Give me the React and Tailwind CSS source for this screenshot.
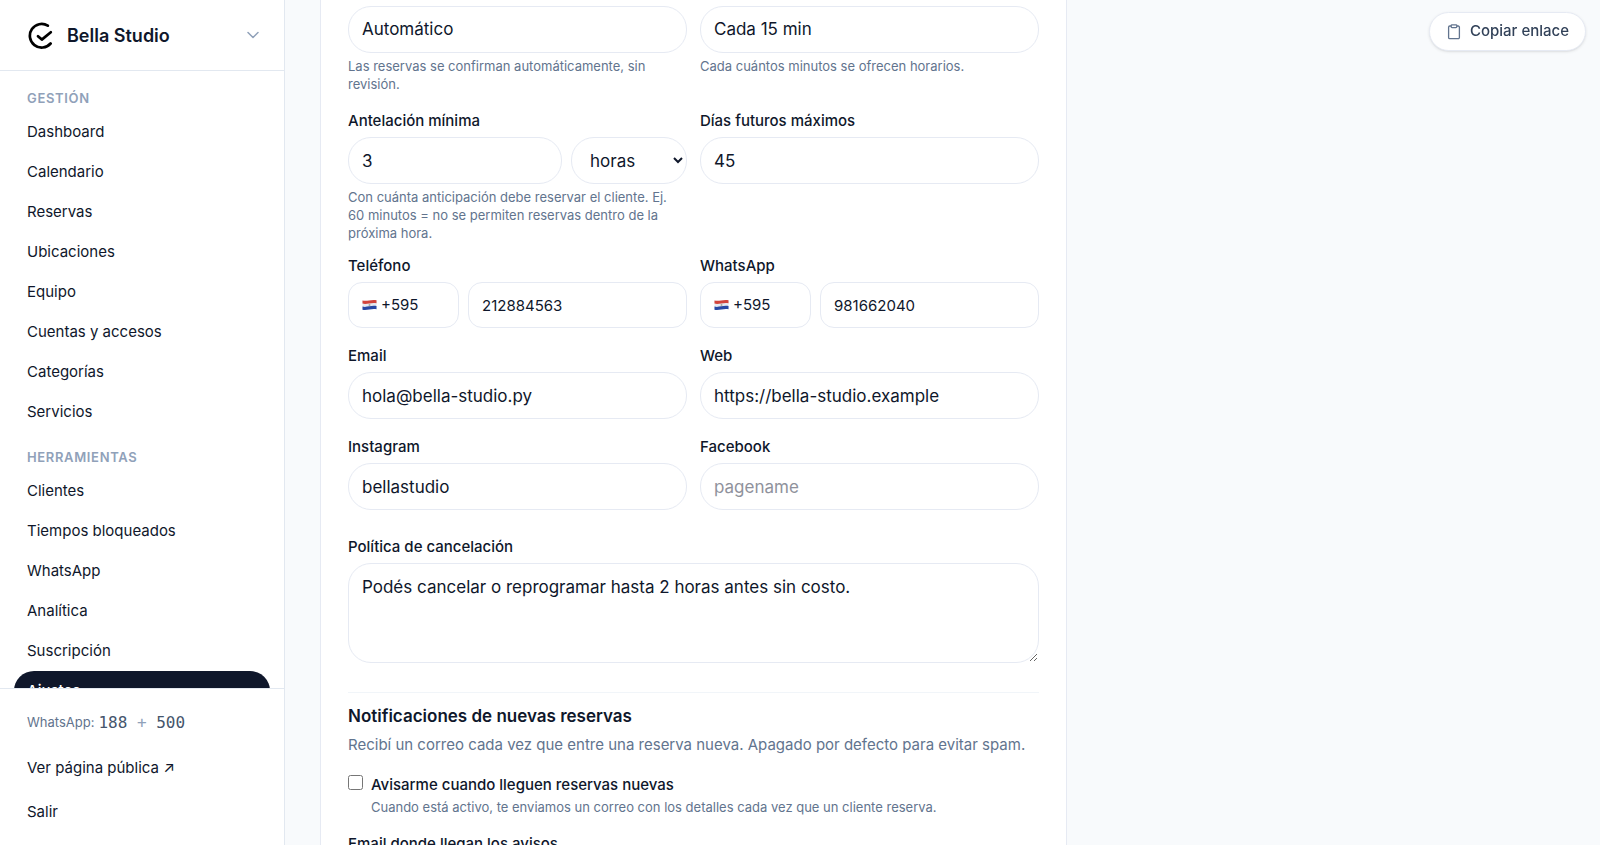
import React from "react";
import { ChevronDown } from "lucide-react";

const management = ["Dashboard", "Calendario", "Reservas", "Ubicaciones", "Equipo", "Cuentas y accesos", "Categorías", "Servicios"];
const tools = ["Clientes", "Tiempos bloqueados", "WhatsApp", "Analítica", "Suscripción", "Ajustes"];

const control = "w-full min-w-0 border border-[#e6eaf3] bg-white px-[13px] text-slate-900 outline-none placeholder:text-[#8f929c]";
const pill = `${control} h-[47px] rounded-[23px] text-[17px]`;

function Logo() {
  return (
    <svg className="size-[27px] shrink-0" viewBox="0 0 27 27" fill="none" stroke="#000" strokeLinecap="round" strokeLinejoin="round" aria-hidden="true">
      <path d="M20.800 3.700A11.800 11.800 0 1 0 23.600 21.500" strokeWidth="2.700" />
      <path d="M11 14.200l3.800 3.400 9-7.400" strokeWidth="2.700" />
    </svg>
  );
}

function Flag() {
  return (
    <svg className="h-3 w-[15px] shrink-0" viewBox="0 0 15 12" aria-hidden="true">
      <path d="M.5 1.500C5 2.600 9 .2 14.500 1.200v9C9 9.200 5 11.800 .5 10.700z" fill="#e6e9f0" />
      <path d="M.5 1.500C5 2.600 9 .2 14.500 1.200v3.100C9 3.300 5 5.700 .5 4.600z" fill="#d2443c" />
      <path d="M.5 7.600C5 8.700 9 6.100 14.500 7.100v3.100C9 9.200 5 11.800 .5 10.700z" fill="#2748a4" />
      <circle cx="7.500" cy="6" r="1" fill="#a9a79a" />
    </svg>
  );
}

function NavSection({ title, items }) {
  return (
    <section className="pt-4">
      <h2 className="mb-[5px] px-[13px] text-[13px] leading-[18px] font-semibold tracking-wider text-slate-400 uppercase">{title}</h2>
      <ul>
        {items.map((item) => (
          <li key={item}>
            <a
              href="#"
              className={
                item === "Ajustes"
                  ? "flex h-10 items-center rounded-[20px] bg-slate-900 px-[13px] text-[15px] font-medium text-white"
                  : "flex h-10 items-center rounded-[20px] px-[13px] text-[15px] text-slate-900"
              }
            >
              {item}
            </a>
          </li>
        ))}
      </ul>
    </section>
  );
}

function Field({ id, label, hint, children }) {
  return (
    <div className="min-w-0">
      {label && (
        <label htmlFor={id} className="mb-1.5 block text-[15px] leading-5 font-medium text-slate-900">
          {label}
        </label>
      )}
      {children}
      {hint && <p className="mt-1 pr-2 text-[13px] leading-[18px] text-slate-500">{hint}</p>}
    </div>
  );
}

function TextField({ id, label, ...rest }) {
  return (
    <Field id={id} label={label}>
      <input id={id} className={pill} {...rest} />
    </Field>
  );
}

function PhoneField({ id, label, value }) {
  return (
    <Field id={id} label={label}>
      <div className="flex gap-[9px]">
        <button type="button" aria-label={`Código de país para ${label}`} className="flex h-[46px] w-[111px] shrink-0 items-center gap-1 rounded-[14px] border border-[#e6eaf3] bg-white px-[13px] text-[15px] text-slate-900">
          <Flag />
          +595
        </button>
        <input id={id} type="tel" defaultValue={value} className={`${control} h-[46px] rounded-[14px] text-[15px]`} />
      </div>
    </Field>
  );
}

function Row({ className = "", children }) {
  return <div className={`grid grid-cols-2 gap-x-[13px] ${className}`}>{children}</div>;
}

export default function App() {
  return (
    <div className="flex h-screen overflow-hidden bg-slate-50 font-['Inter',sans-serif] text-slate-900">
      <aside className="flex w-[285px] shrink-0 flex-col border-r border-slate-200 bg-white">
        <button type="button" className="flex h-[71px] shrink-0 items-center border-b border-slate-200 px-[27px] text-left">
          <Logo />
          <span className="ml-[13px] flex-1 text-[18px] font-semibold">Bella Studio</span>
          <ChevronDown className="-mr-1.5 size-5 text-slate-400" strokeWidth={1.8} />
        </button>
        <nav className="min-h-0 flex-1 overflow-hidden px-3.5 pt-0.5">
          <NavSection title="Gestión" items={management} />
          <NavSection title="Herramientas" items={tools} />
        </nav>
        <div className="shrink-0 border-t border-slate-200 bg-white px-[27px] pt-[22px] pb-[13px]">
          <p className="flex h-6 items-center text-[13px] text-slate-500">
            WhatsApp:
            <span className="ml-1 font-['DejaVu_Sans_Mono','Liberation_Mono',monospace] text-[16px] text-slate-600">
              188 <span className="text-slate-400">+</span> 500
            </span>
          </p>
          <a href="#" className="mt-[13px] flex h-10 items-center text-[15px]">Ver página pública ↗</a>
          <button type="button" className="mt-1 flex h-10 items-center text-[15px]">Salir</button>
        </div>
      </aside>

      <main className="min-w-0 flex-1 overflow-hidden pl-[35px]">
        <form className="w-full max-w-[747px] border-x border-[#e6eaf3] bg-white px-[27px] pt-1.5">
          <Row>
            <Field hint="Las reservas se confirman automáticamente, sin revisión.">
              <select aria-label="Confirmación" className={`${pill} appearance-none`}>
                <option>Automático</option>
              </select>
            </Field>
            <Field hint="Cada cuántos minutos se ofrecen horarios.">
              <select aria-label="Intervalo" className={`${pill} appearance-none`}>
                <option>Cada 15 min</option>
              </select>
            </Field>
          </Row>

          <Row className="mt-[18px]">
            <Field
              id="notice"
              label="Antelación mínima"
              hint="Con cuánta anticipación debe reservar el cliente. Ej. 60 minutos = no se permiten reservas dentro de la próxima hora."
            >
              <div className="flex gap-[9px]">
                <input id="notice" defaultValue="3" className={pill} />
                <select aria-label="Unidad de antelación" className="h-[47px] w-[116px] shrink-0 rounded-[23px] border border-[#e6eaf3] bg-white pl-3.5 text-[17px] text-slate-900">
                  <option>horas</option>
                </select>
              </div>
            </Field>
            <TextField id="days" label="Días futuros máximos" defaultValue="45" />
          </Row>

          <Row className="mt-3.5">
            <PhoneField id="phone" label="Teléfono" value="212884563" />
            <PhoneField id="whatsapp" label="WhatsApp" value="981662040" />
          </Row>
          <Row className="mt-[18px]">
            <TextField id="email" label="Email" type="email" defaultValue="hola@bella-studio.py" />
            <TextField id="web" label="Web" type="url" defaultValue="https://bella-studio.example" />
          </Row>
          <Row className="mt-[18px]">
            <TextField id="instagram" label="Instagram" defaultValue="bellastudio" />
            <TextField id="facebook" label="Facebook" placeholder="pagename" />
          </Row>

          <div className="mt-[27px]">
            <Field id="policy" label="Política de cancelación">
              <textarea
                id="policy"
                defaultValue="Podés cancelar o reprogramar hasta 2 horas antes sin costo."
                className="block h-[100px] w-full resize rounded-[23px] border border-[#e6eaf3] bg-white px-[13px] py-2.5 text-[17px] leading-[26px] outline-none"
              />
            </Field>
          </div>

          <section className="mt-[29px] border-t border-slate-100 pt-2.5">
            <h2 className="text-[17px] leading-[26px] font-semibold">Notificaciones de nuevas reservas</h2>
            <p className="mt-1 text-[15px] leading-6 text-slate-500">Recibí un correo cada vez que entre una reserva nueva. Apagado por defecto para evitar spam.</p>
            <div className="mt-[18px] flex gap-2">
              <input id="notify" type="checkbox" className="size-[15px] shrink-0" />
              <div>
                <label htmlFor="notify" className="block text-[15px] leading-5 font-medium">Avisarme cuando lleguen reservas nuevas</label>
                <p className="mt-[3px] text-[13px] leading-[18px] text-slate-500">Cuando está activo, te enviamos un correo con los detalles cada vez que un cliente reserva.</p>
              </div>
            </div>
            <div className="mt-[18px]">
              <TextField id="notify-email" label="Email donde llegan los avisos" type="email" />
            </div>
          </section>
        </form>
      </main>

      <button type="button" className="fixed top-3 right-3.5 flex h-[39px] items-center gap-[9px] rounded-full border border-[#e6eaf3] bg-white pr-4 pl-[17px] text-[15px] font-medium text-slate-700 shadow-sm">
        <svg className="h-4 w-[14px] text-slate-500" viewBox="0 0 14 16" fill="none" stroke="currentColor" strokeWidth="1.300" strokeLinejoin="round" aria-hidden="true">
          <path d="M4.200 2H2.800a1.200 1.200 0 0 0-1.200 1.200v10.200a1.200 1.200 0 0 0 1.200 1.200h8.400a1.200 1.200 0 0 0 1.200-1.200V3.200A1.200 1.200 0 0 0 11.200 2H9.800" />
          <rect x="4.200" y=".8" width="5.600" height="2.800" rx=".8" />
        </svg>
        Copiar enlace
      </button>
    </div>
  );
}
